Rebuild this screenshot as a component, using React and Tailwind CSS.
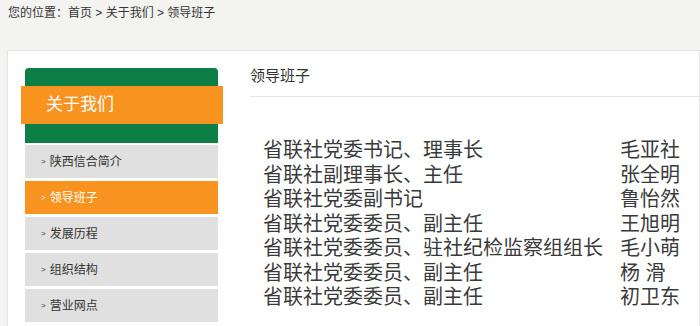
import React from 'react';

const menu = ['陕西信合简介', '领导班子', '发展历程', '组织结构', '营业网点'];

const leaders = [
  ['省联社党委书记、理事长', '毛亚社'],
  ['省联社副理事长、主任', '张全明'],
  ['省联社党委副书记', '鲁怡然'],
  ['省联社党委委员、副主任', '王旭明'],
  ['省联社党委委员、驻社纪检监察组组长', '毛小萌'],
  ['省联社党委委员、副主任', '杨 滑'],
  ['省联社党委委员、副主任', '初卫东'],
];

const App = () => {
  return (
    <div
      className="w-[700px] h-[326px] overflow-hidden bg-[#f3f3f2] text-[#333]"
      style={{ fontFamily: '"Liberation Sans", "Noto Sans CJK SC", sans-serif' }}
    >
      {/* 面包屑 */}
      <div className="pl-[8px] pt-[5px] text-[12px] leading-[16px] text-[#333]">
        您的位置：首页 &gt; 关于我们 &gt; 领导班子
      </div>

      <div className="mt-[29px] ml-[7px] h-[300px] flex bg-white border border-[#e4e4e4]">
        {/* 左侧菜单 */}
        <div className="ml-[17px] pt-[17px] w-[193px] shrink-0">
          <div className="h-[75px] pt-[18px] rounded-t-[4px] bg-[#0b7f46]">
            <div className="-ml-[4px] w-[202px] h-[38px] pl-[25px] bg-[#f8931f] text-white text-[17px] leading-[38px]">
              关于我们
            </div>
          </div>
          <div className="mt-[2px] flex flex-col gap-[3px]">
            {menu.map((item) => (
              <div
                key={item}
                className={`h-[33px] flex items-center pl-[16px] text-[12px] ${
                  item === '领导班子' ? 'bg-[#f8931f] text-white' : 'bg-[#e0e0e0] text-[#333]'
                }`}
              >
                <span className="text-[8px] mr-[4px]">&gt;</span>
                {item}
              </div>
            ))}
          </div>
        </div>

        {/* 右侧内容 */}
        <div className="ml-[32px] flex-1">
          <div className="pt-[16px] pb-[11px] text-[15px] leading-[18px] text-[#333] border-b border-[#e6e6e6]">
            领导班子
          </div>
          <div className="mt-[41px] pl-[13px] text-[20px] leading-[24.5px] text-[#3a3a3a]">
            {leaders.map(([title, name], i) => (
              <div key={i} className="flex">
                <span className="w-[357px] shrink-0 whitespace-nowrap">{title}</span>
                <span className="whitespace-pre">{name}</span>
              </div>
            ))}
          </div>
        </div>
      </div>
    </div>
  );
};

export default App;
